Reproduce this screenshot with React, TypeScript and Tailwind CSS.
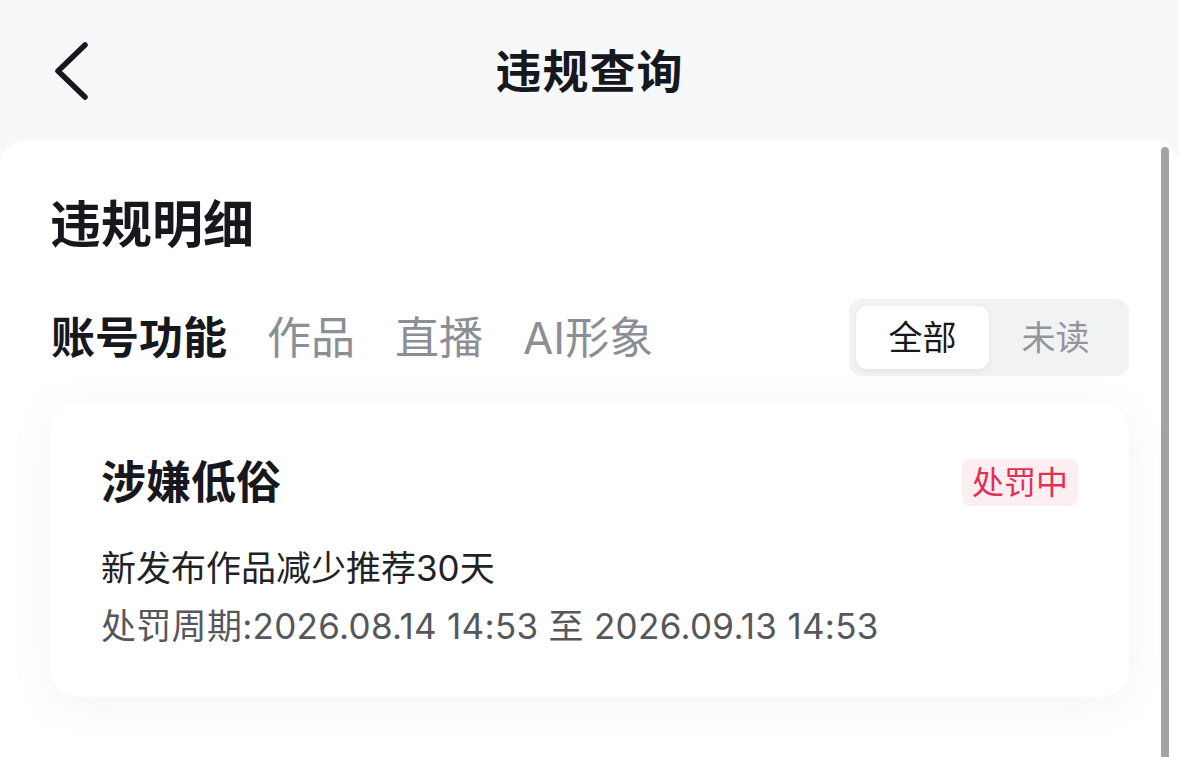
import React, { useState } from 'react';

const tabs = ['账号功能', '作品', '直播', 'AI形象'];

const BackIcon: React.FC = () => (
  <svg width="40" height="60" viewBox="0 0 40 60" fill="none">
    <path d="M33 4 L6 30 L33 56" stroke="#16181d" strokeWidth="5.5" strokeLinecap="round" strokeLinejoin="round" />
  </svg>
);

export default function App() {
  const [tab, setTab] = useState(0);
  const [filter, setFilter] = useState(0);

  return (
    <div
      className="relative w-full h-[757px] overflow-hidden bg-[#f7f8fa] flex flex-col text-[#16181d]"
      style={{ fontFamily: '"Inter", "Noto Sans CJK SC", sans-serif' }}
    >
      {/* header */}
      <div className="h-[140px] shrink-0 grid grid-cols-[1fr_auto_1fr] items-center">
        <button className="justify-self-start ml-[52px] mt-[2px]">
          <BackIcon />
        </button>
        <h1 className="text-[46px] leading-none font-bold tracking-[1px] mt-[2px]">违规查询</h1>
        <div />
      </div>

      {/* panel */}
      <div className="flex-1 bg-white rounded-t-[26px] px-[50px] pt-[59px]">
        <h2 className="text-[51px] leading-none font-bold">违规明细</h2>

        <div className="mt-[49px] flex items-center justify-between">
          <div className="flex items-center gap-[40px] pl-[1px]">
            {tabs.map((t, i) => (
              <button
                key={t}
                onClick={() => setTab(i)}
                className={
                  'text-[44px] leading-none ' +
                  (i === tab ? 'font-bold text-[#16181d]' : 'font-normal text-[#8b8e95]')
                }
              >
                {t}
              </button>
            ))}
          </div>

          <div className="h-[77px] w-[280px] p-[7px] rounded-[13px] bg-[#f1f2f4] flex">
            {['全部', '未读'].map((t, i) => (
              <button
                key={t}
                onClick={() => setFilter(i)}
                className={
                  'flex-1 rounded-[11px] text-[34px] leading-none flex items-center justify-center ' +
                  (i === filter
                    ? 'bg-white text-[#16181d] shadow-[0_2px_6px_rgba(0,0,0,0.06)]'
                    : 'text-[#93959a]')
                }
              >
                {t}
              </button>
            ))}
          </div>
        </div>

        {/* record card */}
        <div className="mt-[27px] h-[294px] rounded-[28px] bg-white shadow-[0_6px_40px_rgba(120,140,200,0.10)] px-[51px] pt-[56px]">
          <div className="flex items-center justify-between h-[47px]">
            <div className="text-[45px] leading-none font-bold">涉嫌低俗</div>
            <span className="h-[47px] px-[10px] rounded-[8px] bg-[#fdeef1] text-[#e62e55] text-[32px] leading-none flex items-center">
              处罚中
            </span>
          </div>
          <p className="mt-[45px] text-[35px] leading-none text-[#202226]">新发布作品减少推荐30天</p>
          <p className="mt-[23px] text-[35px] leading-none text-[#55575c] tracking-[0.3px]">
            处罚周期:2026.08.14 14:53 至 2026.09.13 14:53
          </p>
        </div>
      </div>

      {/* scrollbar overlay */}
      <div className="absolute right-[10px] top-[147px] bottom-0 w-[8px] rounded-t-full bg-[#a3a3a3]" />
    </div>
  );
}
